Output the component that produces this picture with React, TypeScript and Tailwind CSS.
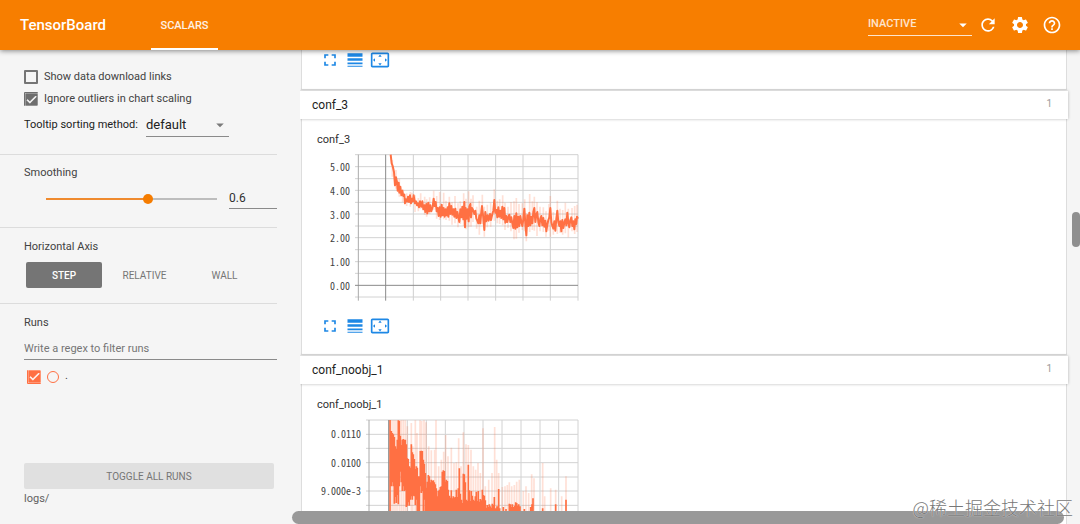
import React, { useState } from "react";
import {
  MdArrowDropDown,
  MdCheck,
  MdFullscreen,
  MdHelpOutline,
  MdLineWeight,
  MdRefresh,
  MdSettings,
  MdSettingsOverscan,
} from "react-icons/md";

/* Charts are drawn on a grid of three units per pixel. */

const LOSS: number[] = [
  302, 44, 305, 70, 308, 78, 312, 96, 315, 136, 318, 112, 321, 126, 323, 152, 326, 128, 328, 158, 331, 140, 334, 166,
  337, 152, 340, 168, 343, 164, 345, 190, 348, 178, 352, 184, 354, 170, 357, 186, 360, 166, 363, 190, 366, 176, 369, 184,
  371, 166, 375, 190, 378, 184, 381, 196, 384, 190, 387, 202, 390, 184, 394, 200, 397, 184, 400, 208, 403, 196, 406, 216,
  409, 192, 412, 220, 415, 188, 418, 214, 421, 196, 424, 214, 428, 200, 431, 176, 434, 198, 437, 186, 440, 214, 443, 204,
  446, 228, 449, 202, 452, 230, 455, 194, 458, 226, 461, 204, 464, 230, 467, 208, 470, 226, 473, 202, 475, 230, 478, 190,
  481, 222, 484, 198, 487, 224, 490, 208, 493, 230, 496, 206, 499, 234, 502, 216, 505, 232, 508, 246, 511, 208, 514, 232,
  517, 200, 520, 238, 523, 186, 525, 262, 527, 204, 530, 236, 533, 208, 536, 244, 538, 200, 541, 192, 543, 232, 546, 204,
  549, 210, 553, 222, 556, 212, 559, 236, 562, 242, 565, 250, 568, 226, 571, 250, 574, 214, 576, 198, 580, 234, 583, 270,
  586, 216, 589, 244, 593, 226, 596, 242, 600, 222, 603, 240, 607, 222, 610, 212, 613, 180, 616, 218, 619, 210, 622, 232,
  625, 202, 628, 230, 631, 212, 634, 234, 637, 200, 640, 238, 643, 204, 646, 248, 649, 228, 652, 246, 655, 232, 658, 224,
  661, 246, 664, 232, 667, 250, 670, 264, 673, 228, 676, 266, 679, 220, 682, 262, 685, 230, 688, 258, 691, 228, 694, 246,
  697, 258, 700, 238, 703, 206, 706, 250, 709, 286, 712, 226, 715, 258, 718, 218, 721, 256, 724, 230, 727, 250, 730, 216,
  733, 204, 736, 246, 739, 224, 742, 216, 745, 246, 748, 258, 751, 236, 754, 228, 757, 256, 760, 234, 763, 260, 766, 242,
  769, 274, 772, 254, 775, 240, 778, 232, 781, 204, 784, 246, 787, 258, 790, 266, 793, 244, 796, 272, 799, 236, 802, 212,
  805, 246, 808, 258, 811, 244, 814, 274, 817, 240, 820, 264, 823, 248, 826, 238, 829, 256, 832, 218, 835, 248, 838, 262,
  841, 240, 844, 232, 847, 258, 850, 244, 853, 268, 856, 238, 859, 252, 861, 230, 864, 236,
];

const LOSS_RAW: [number, number, number][] = [
  [307, 60, 110], [318, 90, 146], [328, 116, 170], [338, 148, 186], [350, 160, 198], [361, 156, 200], [366, 158, 190],
  [375, 166, 216], [385, 174, 214], [392, 160, 206], [404, 170, 224], [410, 178, 230], [419, 172, 222], [431, 152, 210],
  [440, 168, 236], [449, 156, 240], [461, 158, 238], [468, 182, 240], [478, 170, 242], [486, 186, 254], [495, 168, 250],
  [504, 190, 262], [511, 184, 252], [521, 160, 258], [528, 176, 268], [536, 154, 262], [543, 176, 260], [549, 166, 246],
  [560, 200, 266], [568, 182, 284], [577, 164, 252], [583, 200, 290], [592, 194, 262], [602, 188, 260], [613, 148, 242],
  [622, 182, 250], [629, 178, 252], [638, 166, 256], [645, 188, 270], [654, 200, 264], [663, 186, 274], [672, 184, 298],
  [679, 174, 296], [687, 192, 278], [697, 190, 270], [704, 178, 274], [709, 220, 304], [719, 162, 276], [727, 184, 270],
  [733, 170, 272], [741, 186, 288], [750, 200, 274], [760, 202, 276], [768, 214, 290], [777, 192, 272], [781, 168, 290],
  [790, 216, 284], [802, 182, 282], [810, 206, 278], [818, 210, 284], [826, 188, 280], [835, 206, 292], [846, 204, 274],
  [854, 198, 282], [861, 194, 276],
];

const NOOBJ: [number, number, number][] = [
  [300, 361, 660], [304, 394, 560], [307, 400, 548], [310, 404, 560], [313, 412, 612], [316, 440, 592], [319, 448, 610],
  [322, 420, 586], [325, 362, 614], [328, 364, 560], [331, 408, 516], [334, 436, 548], [337, 420, 574], [340, 418, 560],
  [343, 420, 574], [346, 420, 572], [349, 434, 622], [352, 476, 618], [355, 478, 608], [358, 500, 618], [361, 504, 600],
  [364, 434, 590], [367, 458, 600], [370, 464, 588], [373, 478, 590], [376, 508, 616], [379, 500, 600], [382, 504, 640],
  [385, 530, 640], [388, 530, 640], [391, 454, 560], [394, 453, 580], [397, 454, 574], [400, 480, 640], [403, 492, 600],
  [406, 520, 640], [409, 564, 640], [412, 546, 640], [415, 526, 640], [418, 530, 640], [421, 548, 640], [424, 540, 640],
  [427, 544, 640], [430, 542, 640], [433, 548, 640], [436, 554, 640], [439, 566, 640], [442, 590, 640], [445, 574, 640],
  [448, 570, 640], [451, 562, 640], [454, 560, 640], [457, 516, 640], [460, 512, 640], [463, 514, 640], [466, 546, 640],
  [469, 540, 640], [472, 544, 640], [475, 570, 640], [478, 588, 640], [481, 594, 640], [484, 572, 640], [487, 596, 640],
  [490, 590, 640], [493, 594, 640], [496, 592, 640], [499, 570, 640], [502, 592, 640], [505, 566, 640], [508, 506, 640],
  [511, 582, 640], [514, 600, 640], [517, 610, 640], [520, 522, 640], [523, 524, 640], [526, 548, 640], [529, 600, 640],
  [532, 604, 640], [535, 495, 640], [538, 572, 640], [541, 604, 640], [544, 574, 640], [547, 588, 640], [550, 600, 640],
  [553, 604, 640], [556, 590, 640], [559, 576, 640], [562, 604, 640], [565, 574, 640], [568, 606, 640], [571, 598, 640],
  [574, 602, 640], [577, 570, 640], [580, 586, 640], [583, 588, 640], [586, 602, 640], [589, 624, 640], [592, 616, 640],
  [595, 622, 640], [598, 614, 640], [601, 620, 640], [604, 624, 640], [607, 612, 640], [610, 616, 640], [613, 592, 640],
  [616, 626, 640], [621, 620, 640], [626, 568, 640], [629, 626, 640], [640, 622, 640], [648, 628, 640], [658, 612, 640],
  [661, 614, 640], [664, 622, 640], [667, 614, 640], [670, 622, 640], [674, 618, 640], [677, 608, 640], [680, 610, 640],
  [683, 618, 640], [686, 614, 640], [690, 620, 640], [703, 628, 640], [722, 622, 640], [726, 614, 640], [729, 596, 640],
  [758, 626, 640], [797, 614, 640], [828, 600, 640],
];

const NOOBJ_RAW: [number, number, number][] = [
  [303, 361, 640], [309, 361, 640], [315, 361, 640], [321, 361, 640], [328, 361, 640], [334, 361, 640], [340, 361, 640],
  [346, 362, 640], [352, 380, 640], [364, 370, 640], [368, 440, 640], [376, 362, 640], [381, 400, 640], [390, 362, 640],
  [395, 364, 640], [402, 362, 640], [408, 368, 640], [416, 440, 640], [424, 452, 640], [434, 450, 640], [438, 362, 640],
  [446, 500, 640], [454, 480, 640], [461, 456, 640], [467, 406, 640], [474, 470, 640], [484, 444, 640], [492, 490, 640],
  [499, 488, 640], [506, 416, 640], [513, 500, 640], [520, 398, 640], [528, 434, 640], [535, 436, 640], [543, 450, 640],
  [550, 500, 640], [557, 510, 640], [564, 490, 640], [571, 520, 640], [579, 386, 640], [586, 560, 640], [596, 540, 640],
  [606, 520, 640], [614, 382, 640], [620, 480, 640], [626, 520, 640], [637, 562, 640], [645, 560, 640], [652, 556, 640],
  [658, 548, 640], [665, 560, 640], [673, 556, 640], [680, 546, 640], [688, 540, 640], [700, 574, 640], [708, 560, 640],
  [716, 580, 640], [725, 524, 640], [732, 536, 640], [758, 490, 640], [764, 590, 640], [782, 566, 640], [797, 570, 640],
  [815, 590, 640], [828, 530, 640],
];

function toPath(flat: number[]) {
  let d = "";
  for (let i = 0; i < flat.length; i += 2) d += `${i ? "L" : "M"}${flat[i]} ${flat[i + 1]}`;
  return d;
}

function toBars(bars: [number, number, number][]) {
  return bars.map(([x, top, bottom]) => `M${x} ${top}V${bottom}`).join("");
}

function LossChart() {
  return (
    <svg width="226" height="150" viewBox="192 36 678 450" role="img" aria-label="conf_3">
      <path
        d="M195 44H864M195 80H864M195 116H864M195 151H864M195 187H864M195 222H864M195 258H864M195 293H864M195 329H864M195 365H864M195 400H864M195 471H864"
        stroke="#d2d2d2" strokeWidth="3" fill="none"
      />
      <path
        d="M370 44V482M452 44V482M534 44V482M617 44V482M699 44V482M781 44V482M864 44V482"
        stroke="#cfcfcf" strokeWidth="3" fill="none"
      />
      <path d="M205 44V482" stroke="#aaa" strokeWidth="3" />
      <path d="M287 44V482M195 436H864" stroke="#8a8a8a" strokeWidth="3" />
      <path d={toBars(LOSS_RAW)} stroke="#ff7043" strokeOpacity="0.22" strokeWidth="5" fill="none" />
      <path d={toPath(LOSS)} stroke="#ff7043" strokeWidth="6" fill="none" strokeLinejoin="round" />
    </svg>
  );
}

function NoobjChart() {
  return (
    <svg width="215" height="98" viewBox="225 352 645 294" role="img" aria-label="conf_noobj_1">
      <path
        d="M228 361H864M228 404H864M228 446H864M228 489H864M228 532H864M228 574H864M228 617H864"
        stroke="#d2d2d2" strokeWidth="3" fill="none"
      />
      <path
        d="M352 361V646M409 361V646M466 361V646M522 361V646M579 361V646M636 361V646M693 361V646M750 361V646M806 361V646M864 361V646"
        stroke="#d2d2d2" strokeWidth="3" fill="none"
      />
      <path d="M237 361V646" stroke="#aaa" strokeWidth="3" />
      <path d={toBars(NOOBJ_RAW)} stroke="#ff7043" strokeOpacity="0.22" strokeWidth="5" fill="none" />
      <path d={toBars(NOOBJ)} stroke="#ff7043" strokeWidth="5" fill="none" />
      <path d="M296 361V646" stroke="#8a8a8a" strokeWidth="3" />
    </svg>
  );
}

function ChartTools() {
  return (
    <div className="flex gap-[5px] pl-[3px] text-[#1e88e5]">
      <button aria-label="Toggle full size"><MdFullscreen size={20} /></button>
      <button aria-label="Toggle log scale"><MdLineWeight size={20} /></button>
      <button aria-label="Fit domain to data"><MdSettingsOverscan size={20} /></button>
    </div>
  );
}

function CategoryBar({ name }: { name: string }) {
  return (
    <button className="z-10 flex h-7 w-full shrink-0 items-center justify-between bg-white pr-4 pl-3 shadow-[0_0_3px_rgba(0,0,0,0.28)]">
      <span className="text-xs text-[#212121]">{name}</span>
      <span className="pb-[3px] text-[10px] text-[#9a9a9a]">1</span>
    </button>
  );
}

function Card({ children, className = "" }: { children: React.ReactNode; className?: string }) {
  return <section className={`mx-px shrink-0 border border-t-0 border-[#ddd] bg-white pl-[15px] ${className}`}>{children}</section>;
}

function Axis({ labels, className }: { labels: string[]; className: string }) {
  return (
    <div className={`flex flex-col justify-between pr-1 text-right font-['Noto_Sans_Mono_CJK_SC','Liberation_Mono',monospace] text-[10px] leading-3 text-[#424242] ${className}`}>
      {labels.map((l) => (
        <span key={l}>{l}</span>
      ))}
    </div>
  );
}

function Check({ label, checked, tone, onChange }: { label: React.ReactNode; checked: boolean; tone: string; onChange: () => void }) {
  return (
    <label className="flex items-center gap-[6px] text-[11px] leading-4 text-[#424242]">
      <span className="grid size-[14px] place-items-center">
        <input
          type="checkbox"
          checked={checked}
          onChange={onChange}
          className={`col-start-1 row-start-1 size-[14px] appearance-none rounded-[1px] ${tone}`}
        />
        {checked && <MdCheck size={13} className="pointer-events-none col-start-1 row-start-1 stroke-1 text-white" />}
      </span>
      {label}
    </label>
  );
}

export default function App() {
  const [links, setLinks] = useState(false);
  const [outliers, setOutliers] = useState(true);
  const [run, setRun] = useState(true);
  const [smoothing, setSmoothing] = useState("0.6");
  const [axis, setAxis] = useState("STEP");
  return (
    <div className="relative flex h-screen flex-col overflow-hidden bg-[#f5f5f5] font-[Roboto,sans-serif] text-[#424242]">
      <header className="z-20 flex h-[50px] shrink-0 items-center bg-[#f77e00] pr-[18px] pl-5 text-white shadow-[0_1px_5px_rgba(0,0,0,0.45)]">
        <h1 className="w-[131px] text-[15px] font-medium">TensorBoard</h1>
        <nav className="h-full">
          <a href="#scalars" className="flex h-full w-[67px] items-center justify-center border-b-2 border-b-white pt-1 text-[11px] font-medium text-white/90">
            SCALARS
          </a>
        </nav>
        <div className="ml-auto flex items-center gap-3">
          <label className="-mr-[6px] grid w-[104px] items-center border-b border-white/80">
            <select aria-label="Inactive dashboards" className="col-start-1 row-start-1 h-[21px] w-full appearance-none bg-transparent text-[11px] font-medium text-white/80">
              <option>INACTIVE</option>
            </select>
            <MdArrowDropDown size={18} className="pointer-events-none col-start-1 row-start-1 justify-self-end" />
          </label>
          <button aria-label="Reload"><MdRefresh size={20} /></button>
          <button aria-label="Settings"><MdSettings size={20} /></button>
          <button aria-label="Help"><MdHelpOutline size={20} /></button>
        </div>
      </header>

      <div className="flex min-h-0 flex-1">
        <aside className="flex w-[300px] shrink-0 flex-col pr-[23px]">
          <div className="flex flex-col gap-[6px] border-b border-[#dcdcdc] pt-[19px] pb-[17px] pl-6">
            <Check label="Show data download links" checked={links} onChange={() => setLinks(!links)} tone="border-2 border-[#757575]" />
            <Check label="Ignore outliers in chart scaling" checked={outliers} onChange={() => setOutliers(!outliers)} tone="bg-[#6e6e6e]" />
            <div className="mt-px flex items-center gap-2 text-[11px] text-[#212121]">
              <label htmlFor="sorting">Tooltip sorting method:</label>
              <span className="grid w-[83px] items-center border-b border-[#8a8a8a]">
                <select id="sorting" className="col-start-1 row-start-1 h-[22px] w-full appearance-none bg-transparent text-[13px]">
                  <option>default</option>
                </select>
                <MdArrowDropDown size={18} className="pointer-events-none col-start-1 row-start-1 justify-self-end text-[#7a7a7a]" />
              </span>
            </div>
          </div>

          <div className="border-b border-[#dcdcdc] pt-[10px] pb-[18px] pl-6">
            <label htmlFor="smoothing" className="block text-[11px] leading-4">Smoothing</label>
            <div className="mt-2 flex items-center gap-3 pl-[22px]">
              <input
                id="smoothing"
                type="range"
                min="0"
                max="1"
                step="0.001"
                value={smoothing}
                onChange={(e) => setSmoothing(e.target.value)}
                className="h-[2px] min-w-0 flex-1 appearance-none bg-linear-to-r from-[#ef8a2e] from-60% to-[#bdbdbd] to-60% [&::-webkit-slider-thumb]:size-[10px] [&::-webkit-slider-thumb]:appearance-none [&::-webkit-slider-thumb]:rounded-full [&::-webkit-slider-thumb]:bg-[#f57c00]"
              />
              <input
                aria-label="Smoothing value"
                value={smoothing}
                onChange={(e) => setSmoothing(e.target.value)}
                className="h-5 w-12 border-b border-[#8a8a8a] bg-transparent pb-[2px] text-xs text-[#303030]"
              />
            </div>
          </div>

          <div className="border-b border-[#dcdcdc] pt-[11px] pb-[15px] pl-6">
            <h2 className="text-[11px] leading-4">Horizontal Axis</h2>
            <div className="mt-[7px] flex pl-[2px] text-[10px] text-[#757575]">
              {["STEP", "RELATIVE", "WALL"].map((a) => (
                <button
                  key={a}
                  onClick={() => setAxis(a)}
                  className={a === axis ? "h-[26px] w-[76px] rounded-[2px] bg-[#757575] font-medium text-white" : "mr-[-5px] h-[26px] w-[85px]"}
                >
                  {a}
                </button>
              ))}
            </div>
          </div>

          <div className="flex flex-1 flex-col pt-[11px] pb-[17px] pl-6">
            <label htmlFor="filter" className="text-[11px] leading-4">Runs</label>
            <input
              id="filter"
              placeholder="Write a regex to filter runs"
              className="mt-[7px] h-[22px] w-full shrink-0 border-b border-[#8a8a8a] bg-transparent text-[11px] placeholder:text-[#757575]"
            />
            <div className="mt-2 pl-[3px]">
              <Check
                checked={run}
                onChange={() => setRun(!run)}
                tone={run ? "bg-[#ff7043]" : "border-2 border-[#ff7043]"}
                label={
                  <>
                    <span className="size-3 rounded-full border-[1.5px] border-[#ff7043]" />
                    <span className="pb-px">.</span>
                  </>
                }
              />
            </div>
            <button className="mt-auto mr-[3px] h-[26px] shrink-0 rounded-[2px] bg-[#e0e0e0] text-[10px] text-[#757575]">
              TOGGLE ALL RUNS
            </button>
            <p className="mt-[2px] text-[11px] leading-4 text-[#616161]">logs/</p>
          </div>
        </aside>

        <main className="flex min-w-0 flex-1 flex-col overflow-hidden pr-3">
          <Card className="h-10">
            <ChartTools />
          </Card>
          <div className="h-px shrink-0" />
          <CategoryBar name="conf_3" />
          <Card className="pt-[13px] pb-[18px]">
            <h3 className="text-[11px] leading-4 text-[#303030]">conf_3</h3>
            <div className="mt-1 mb-[14px] flex items-start">
              <Axis labels={["5.00", "4.00", "3.00", "2.00", "1.00", "0.00"]} className="mt-[9px] h-[131px] w-[37px]" />
              <LossChart />
            </div>
            <ChartTools />
          </Card>
          <div className="h-px shrink-0" />
          <CategoryBar name="conf_noobj_1" />
          <Card className="pt-[13px] pb-[18px]">
            <h3 className="text-[11px] leading-4 text-[#303030]">conf_noobj_1</h3>
            <div className="mt-1 flex items-start">
              <Axis labels={["0.0110", "0.0100", "9.000e-3"]} className="mt-[11px] h-[69px] w-12" />
              <NoobjChart />
            </div>
          </Card>
        </main>
      </div>

      <div className="absolute top-[212px] right-0 z-30 h-[35px] w-2 rounded bg-[#8f8f8f]" />
      <div className="absolute right-4 bottom-0 left-[292px] z-30 h-[13px] rounded-full bg-[#999]" />
      <p className="absolute right-[7px] bottom-[3px] z-40 font-['Noto_Sans_CJK_SC',sans-serif] text-[18px] leading-7 font-light text-[#777] [text-shadow:0_0_1px_#fff]">
        @稀土掘金技术社区
      </p>
    </div>
  );
}
